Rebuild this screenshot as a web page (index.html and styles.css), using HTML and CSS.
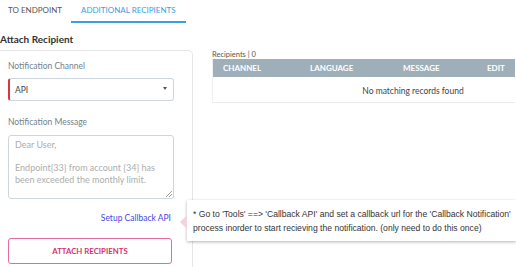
FILE: index.html
```html
<!DOCTYPE html>
<html>
<head>
<meta charset="utf-8">
<link rel="stylesheet" href="styles.css">
</head>
<body>
<div class="page">
  <div class="tabs">
    <div class="tab">TO ENDPOINT</div>
    <div class="tab active">ADDITIONAL RECIPIENTS</div>
  </div>
  <div class="heading">Attach Recipient</div>
  <div class="cols">
    <div class="card">
      <div class="label">Notification Channel</div>
      <div class="select"><span>API</span><span class="caret"></span></div>
      <div class="label label-msg">Notification Message</div>
      <div class="textarea">
        <div>Dear User,</div>
        <div class="blank"></div>
        <div>Endpoint{33} from account {34} has been exceeded the monthly limit.</div>
        <svg class="grip" width="6" height="6" viewBox="0 0 6 6"><path d="M6 0 L0 6 M6 3 L3 6" stroke="#888" stroke-width="0.8"/></svg>
      </div>
      <div class="linkrow"><span class="link">Setup Callback API</span></div>
      <div class="btn">ATTACH RECIPIENTS</div>
    </div>
    <div class="right">
      <div class="count">Recipients | 0</div>
      <div class="table">
        <div class="thead">
          <div>CHANNEL</div><div>LANGUAGE</div><div>MESSAGE</div><div>EDIT</div>
        </div>
        <div class="empty">No matching records found</div>
      </div>
    </div>
  </div>
  <div class="tooltip">
    <span class="arrow"></span>
    * Go to 'Tools' ==&gt; 'Callback API' and set a callback url for the 'Callback Notification'<br>process inorder to start recieving the notification. (only need to do this once)
  </div>
</div>
</body>
</html>
```
FILE: styles.css
```css
html, body { margin: 0; padding: 0; background: #fff; overflow: hidden; }
body { font-family: Lato, "Open Sans", sans-serif; width: 516px; height: 267px; }
.page { position: relative; width: 516px; height: 267px; overflow: hidden; }
.tabs { display: flex; height: 23px; }
.tab { font-size: 8px; color: #555; line-height: 21px; padding: 0 9px 0 8px; border-bottom: 2px solid transparent; }
.tab.active { color: #3d9de3; border-bottom-color: #3d9de3; padding: 0 10px; }
.heading { font-size: 10px; font-weight: bold; color: #333; margin-top: 10px; line-height: 13px; height: 13px; }
.cols { display: flex; margin-top: 4px; }
.card { flex: none; width: 184px; border: 1px solid #e6e6e6; border-left: none; border-bottom: none; border-radius: 0 5px 0 0; padding: 10px 0 0 8px; height: 207px; }
.label { font-size: 8.5px; color: #6f7f90; line-height: 11px; }
.select { margin-top: 6px; height: 21px; border: 1px solid #cfd5dc; border-left: 2px solid #d9363e; border-radius: 3px; display: flex; align-items: center; justify-content: space-between; padding: 0 6px 0 5px; width: 152px; font-size: 8.5px; color: #444; }
.caret { width: 0; height: 0; border-left: 2.5px solid transparent; border-right: 2.5px solid transparent; border-top: 3px solid #555; margin-bottom: 3px; }
.label-msg { margin-top: 16px; }
.textarea { position: relative; margin-top: 7px; width: 153px; height: 54px; border: 1px solid #cfd5dc; border-radius: 3px; padding: 3px 5px 5px 6px; font-size: 9px; line-height: 12.5px; color: #adadad; }
.blank { height: 10px; }
.grip { position: absolute; right: 1px; bottom: 1px; }
.linkrow { margin-top: 14px; width: 163px; text-align: right; font-size: 8.5px; line-height: 11px; }
.link { color: #4646e6; }
.btn { margin-top: 14px; width: 162px; height: 24px; border: 1.5px solid #e46aa0; border-radius: 3px; display: flex; align-items: center; justify-content: center; font-size: 7.8px; font-weight: bold; color: #d8306f; }
.right { margin-left: 19px; width: 303px; flex: none; overflow: hidden; }
.count { font-size: 7.5px; color: #555; line-height: 9px; height: 9px; }
.table { border-left: 1px solid #f0f0f0; width: 400px; }
.thead { display: grid; grid-template-columns: 87px 93px 84px auto; height: 18px; background: #9eafb9; color: #fff; font-size: 8px; font-weight: bold; align-items: center; padding-left: 10px; }
.empty { height: 25px; border-bottom: 1px solid #ececec; text-align: center; line-height: 28px; font-size: 8.5px; color: #444; }
.tooltip { position: absolute; left: 187px; top: 200px; width: 329px; height: 41px; box-sizing: border-box; background: #fff; box-shadow: 0 1px 3px rgba(0,0,0,0.3); padding: 7px 0 0 6px; font-family: "Liberation Sans", Arial, sans-serif; font-size: 8.6px; line-height: 14px; color: #333; }
.arrow { position: absolute; left: -7px; top: 15px; width: 0; height: 0; border-top: 7px solid transparent; border-bottom: 7px solid transparent; border-right: 7px solid #f2d5da; }
```
